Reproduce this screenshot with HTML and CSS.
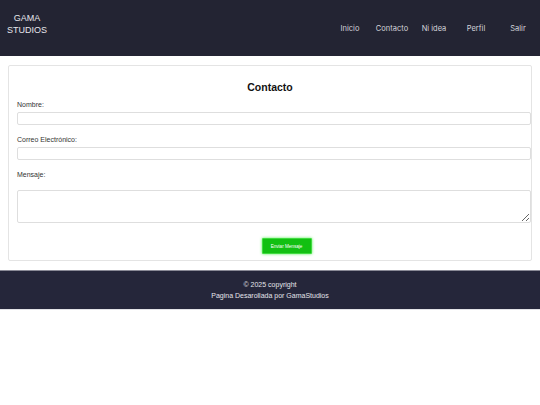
FILE: index.html
```html
<!DOCTYPE html>
<html lang="es">
<head>
  <meta charset="UTF-8">
  <meta name="viewport" content="width=device-width, initial-scale=1.0">
  <title>Contacto - GamaStudios</title>
  <link rel="stylesheet" href="styles.css">
</head>
<body>
  <header class="header">
    <div class="logo">GAMA<br>STUDIOS</div>
    <nav class="nav">
      <a href="#">Inicio</a>
      <a href="#">Contacto</a>
      <a href="#">Ni idea</a>
      <a href="#">Perfil</a>
      <a href="#">Salir</a>
    </nav>
  </header>

  <main class="card">
    <h2 class="card-title">Contacto</h2>
    <form class="form">
      <label for="nombre">Nombre:</label>
      <input type="text" id="nombre" class="field">

      <label for="correo">Correo Electrónico:</label>
      <input type="email" id="correo" class="field">

      <label for="mensaje">Mensaje:</label>
      <textarea id="mensaje" class="field area"></textarea>

      <div class="actions">
        <button type="submit" class="btn">Enviar Mensaje</button>
      </div>
    </form>
  </main>

  <footer class="footer">
    <p>© 2025 copyright</p>
    <p>Pagina Desarollada por GamaStudios</p>
  </footer>
</body>
</html>
```

FILE: styles.css
```css
body {
  margin: 0;
  font-family: 'Liberation Sans', Arial, sans-serif;
  background-color: #fff;
  color: #222;
}

.header {
  height: 56px;
  background-color: #232433;
  display: flex;
  align-items: center;
  justify-content: space-between;
}

.logo {
  padding-left: 7px;
  padding-bottom: 8px;
  font-size: 9px;
  line-height: 12px;
  text-align: center;
  color: #e6e6ec;
}

.nav {
  display: flex;
  padding-right: 1px;
}

.nav a {
  width: 42px;
  text-align: center;
  font-family: 'Inter', 'Noto Sans', sans-serif;
  font-size: 7.5px;
  color: #d4d4dc;
  text-decoration: none;
}

.card {
  display: block;
  margin: 9px 8px;
  padding: 8px 8px 6px;
  border: 1px solid #e4e4e4;
  border-radius: 2px;
}

.card-title {
  margin: 6px 0 6px;
  font-size: 10.5px;
  line-height: 14px;
  text-align: center;
  color: #111;
}

.form label {
  display: block;
  font-size: 7px;
  line-height: 9px;
  color: #333;
  margin-bottom: 3px;
}

.form label + .field + label {
  margin-top: 10px;
}

.form label[for="mensaje"] {
  margin-top: 11px;
  margin-bottom: 11px;
}

.field {
  display: block;
  height: 13px;
  padding: 0 3px;
  border: 1px solid #dedede;
  border-radius: 2px;
  font-size: 7px;
  box-sizing: border-box;
  width: calc(100% + 8px);
}

.area {
  height: 33px;
  resize: vertical;
}

.actions {
  display: flex;
  justify-content: center;
  margin-top: 15px;
  padding-left: 33px;
}

.btn {
  width: 50px;
  height: 16px;
  padding: 0;
  background-color: #12c012;
  border: 1px solid #3fdc3f;
  border-radius: 1px;
  box-shadow: 0 0 3px #55ee55;
  color: #fff;
  font-family: 'Liberation Sans', Arial, sans-serif;
  font-size: 4.6px;
}

.footer {
  margin-top: 9px;
  height: 38px;
  background-color: #25263a;
  border-top: 1px solid #8a8a96;
  border-bottom: 1px solid #e2e2e6;
  text-align: center;
  display: flex;
  flex-direction: column;
  justify-content: center;
}

.footer p {
  margin: 0;
  font-size: 7px;
  line-height: 11px;
  color: #e4e4ea;
}
```
